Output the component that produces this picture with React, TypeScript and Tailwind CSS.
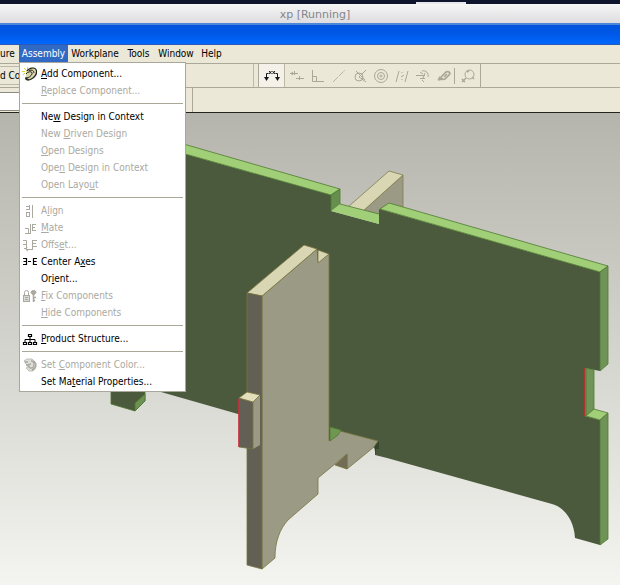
import React from 'react';

type MenuEntry = {
  // the text before, at and after the access key
  label: [string, string, string];
  icon?: React.ReactNode;
  disabled?: boolean;
};

const Icon: React.FC<{ children: React.ReactNode }> = ({ children }) => (
  <svg viewBox="0 0 16 16" className="block h-4 w-4" fill="none" stroke="currentColor" aria-hidden="true">
    {children}
  </svg>
);

const AddIcon = () => (
  <Icon>
    <path d="M2 2l3 3M5.500 1v3M0 5.500h3M1 9l2-2" stroke="#d8d23c" />
    <path d="M4 5l5-4 5 1 1 4-3 5-5 4-4-1 1-4z" fill="#d9d6b0" stroke="none" />
    <path d="M5 5c3-4 9-4 9.500 0s-3 7-6 8.500c-3 1-5 0-5-2" stroke="#24241c" strokeWidth="1.200" />
    <path d="M4 8c2-3 7-3 6 0-1 2-3 4-6 4M7 4.500c3-1 5 0 5 2.500M4 12l3 2" stroke="#24241c" />
  </Icon>
);

const AlignIcon = () => (
  <Icon>
    <path d="M10.500 2v13M4 3.500h4M4 6.500h4M4 9.500h4M4 13.500h4M7.500 2v5M7.500 9v5M4.500 9v5" />
  </Icon>
);

const MateIcon = () => (
  <Icon>
    <path d="M8.500 4v10M3 8.500h3.500v5M3 13.500h5M10 4.500h4M10 7.500h3M10 10.500h4M10.500 4v6" />
  </Icon>
);

const OffsetIcon = () => (
  <Icon>
    <path d="M1 3.500h3.500v9M1 7.500h3M2 11.500h2M5 12.500h6M10.500 3v10M11 3.500h4M11 6.500h3M11 9.500h4M5 10.500l-1 2 2 1.500" />
  </Icon>
);

const AxesIcon = () => (
  <Icon>
    <path d="M1 4.500h3.500v6H1M1.500 7.500h3M6 7.500h3M15 4.500h-3.500v6H15M11.500 7.500h3" strokeWidth="1.200" />
  </Icon>
);

const FixIcon = () => (
  <Icon>
    <rect x="1.500" y="7.500" width="6" height="6" fill="#d8d8d4" />
    <path d="M2.500 7V4.500a2 2 0 0 1 4 0V7M3 9.500h3M3 11.500h3" />
    <path d="M9 4.500a2.500 2 0 1 1 5 0l-1.500 2h-2z" fill="currentColor" />
    <path d="M11.500 6v8M11 9.500h3M11 12.500h2" strokeWidth="1.500" />
  </Icon>
);

const StructureIcon = () => (
  <Icon>
    <path d="M8 5v6M3 11V8.500h10V11" />
    <path d="M6.500 3.500h3v2h-3zM1.500 11.500h3v2h-3zM6.500 11.500h3v2h-3zM11.500 11.500h3v2h-3z" fill="#fff" strokeWidth="1.200" />
  </Icon>
);

const ColorIcon = () => (
  <Icon>
    <path d="M2 4l3-2 5 0 4 4v4l-3 4H7l-3-3 2-1z" fill="#dededa" stroke="#c0c0b8" />
    <path d="M3 5h3M4 8h3M9 4c4 0 4 7 0 7-3 0-3-4 0-4M12 4c3 3 2 8-2 9" strokeWidth="1.300" />
  </Icon>
);

const menuGroups: MenuEntry[][] = [
  [
    { label: ['', 'A', 'dd Component...'], icon: <AddIcon /> },
    { label: ['', 'R', 'eplace Component...'], disabled: true },
  ],
  [
    { label: ['Ne', 'w', ' Design in Context'] },
    { label: ['New ', 'D', 'riven Design'], disabled: true },
    { label: ['', 'O', 'pen Designs'], disabled: true },
    { label: ['Ope', 'n', ' Design in Context'], disabled: true },
    { label: ['Open Layo', 'u', 't'], disabled: true },
  ],
  [
    { label: ['A', 'l', 'ign'], icon: <AlignIcon />, disabled: true },
    { label: ['', 'M', 'ate'], icon: <MateIcon />, disabled: true },
    { label: ['Offs', 'e', 't...'], icon: <OffsetIcon />, disabled: true },
    { label: ['Center A', 'x', 'es'], icon: <AxesIcon /> },
    { label: ['Or', 'i', 'ent...'] },
    { label: ['', 'F', 'ix Components'], icon: <FixIcon />, disabled: true },
    { label: ['', 'H', 'ide Components'], disabled: true },
  ],
  [{ label: ['', 'P', 'roduct Structure...'], icon: <StructureIcon /> }],
  [
    { label: ['Set ', 'C', 'omponent Color...'], icon: <ColorIcon />, disabled: true },
    { label: ['Set Ma', 't', 'erial Properties...'] },
  ],
];

const constraintTools: { name: string; drawing: React.ReactNode }[] = [
  { name: 'Coincident', drawing: <path d="M1 5.500h8M5.500 3v4M7 10.500h8M10.500 8v4M4 4l-2 1.500L4 7" /> },
  { name: 'Perpendicular', drawing: <path d="M2.500 2v11.500H14M2 8.500h4.500V13" /> },
  { name: 'Parallel', drawing: <path d="M2 14L14 2" strokeDasharray="7 1" strokeWidth="0.800" /> },
  {
    name: 'Tangent',
    drawing: (
      <>
        <circle cx="7" cy="9" r="4" />
        <path d="M14 2L7 9l7 5M4 3l9 9" />
      </>
    ),
  },
  {
    name: 'Concentric',
    drawing: (
      <>
        <circle cx="8" cy="8" r="6.500" />
        <circle cx="8" cy="8" r="3.500" />
        <circle cx="8" cy="8" r="1" />
      </>
    ),
  },
  { name: 'Symmetric', drawing: <path d="M2 14L5 3M11 14l3-11M7 9l3-2M8 4v1M8 11v1" /> },
  { name: 'Equal', drawing: <path d="M1 7.500h9M5 10.500h5M5 4l3 2M7 12l2 2M7 3c4-1 7 2 6 6M10 5l-2 5" /> },
  {
    name: 'Fix',
    drawing: (
      <>
        <path d="M3 9l3 3M2 12l4-2" strokeWidth="2" />
        <path d="M6 8l4-4c3-1 5 1 3 3l-4 4c-3 1-5-1-3-3zM8 9l3-3" strokeWidth="1.700" />
      </>
    ),
  },
];

const AssemblyMenu = () => (
  <div
    role="menu"
    className="absolute left-0 top-full z-10 w-[167px] border border-[#a9a799] bg-white px-[2px] pt-[2px] pb-px text-black"
  >
    {menuGroups.map((group, i) => (
      <div key={i} role="group" className={i > 0 ? 'mt-1 border-t border-[#aca899] pt-1' : ''}>
        {group.map(({ label, icon, disabled }) => (
          <button
            key={label.join('')}
            type="button"
            role="menuitem"
            disabled={disabled}
            className="flex h-[17px] w-full items-center gap-[3px] whitespace-nowrap text-left disabled:text-[#aaa99f]"
          >
            <span className="h-4 w-4 shrink-0">{icon}</span>
            <span>
              {label[0]}
              <u>{label[1]}</u>
              {label[2]}
            </span>
          </button>
        ))}
      </div>
    ))}
  </div>
);

const MenuBar = () => (
  <nav className="flex h-[18px] whitespace-nowrap bg-[#ebe8d8] pb-px">
    <button type="button" className="w-[19px] pr-[6px] text-right">ure</button>
    <div className="relative">
      <button type="button" className="h-full w-[49px] bg-[#316ac5] text-white">Assembly</button>
      <AssemblyMenu />
    </div>
    <button type="button" className="w-[54px]">Workplane</button>
    <button type="button" className="w-[33px]">Tools</button>
    <button type="button" className="w-[42px]">Window</button>
    <button type="button" className="w-[29px]">Help</button>
  </nav>
);

const Toolbar = () => (
  <div className="flex h-[25px] border-y border-[#aca899] bg-[#ebe8d8] text-[#aaa796]">
    <div className="w-[254px] shrink-0 border-r border-[#bdb9a8] py-[2px]">
      <button type="button" className="h-[19px] w-[22px] border-y border-[#bdb9a8] text-left text-black">d Co</button>
    </div>
    <div className="ml-1 flex items-center border-x border-[#aca899]">
      <button type="button" aria-label="Dimension" className="flex h-full w-[26px] items-center justify-center border-r border-[#bdb9a8] bg-[#f4f2e8] text-[#17171f]">
        <Icon>
          <path d="M2.500 12V5.500h2M13.500 12V5.500h-2" />
          <path d="M0 9h5l-2.500 4zM11 9h5l-2.500 4z" fill="currentColor" stroke="none" />
          <path d="M5 3l2.500 3M7.500 3L5 6M8.500 3L11 6M11 3L8.500 6" />
        </Icon>
      </button>
      <div className="flex gap-[5px] pl-1 pr-[2px]">
        {constraintTools.map((tool) => (
          <button key={tool.name} type="button" aria-label={tool.name}>
            <Icon>{tool.drawing}</Icon>
          </button>
        ))}
      </div>
      <button type="button" aria-label="Inspect" className="flex h-4 w-[26px] items-center justify-center border-l border-[#aca899]">
        <Icon>
          <circle cx="9.500" cy="6.500" r="4.500" />
          <path d="M6 10l-4 4M2 11l3 3M12 9l2 2M7 4l2-1" strokeWidth="1.500" />
        </Icon>
      </button>
    </div>
  </div>
);

const Viewport = () => (
  <main className="flex-1 bg-linear-to-b from-[#b5b5ad] to-[#f4f4f0]">
    <svg viewBox="0 113 620 472" className="block w-full" role="img" aria-label="Interlocking panels">
      <g strokeWidth="0.8" strokeLinejoin="round">
        {/* back end of the cross panel */}
        <g stroke="#807b4e">
          <path d="M363 211L403 175V208L390 205L380 209V215Z" fill="#9b9a84" />
          <path d="M348 207L389 171L403 175L363 211Z" fill="#d9d6b4" />
        </g>

        {/* left foot */}
        <path d="M111 385V404L135 411L145 401V385Z" fill="#4b5a3c" stroke="#4e7434" />
        <path d="M135 411V403L145 394V401Z" fill="#6c9150" stroke="#4e7434" />

        {/* long panel */}
        <path
          d="M100 130L331 195V211L379 224V209L600 272V371L585 368V416L600 420V545L575 538C574 520 564 507 552 504L387 458L375 455V441H330L238 414L161 392H100Z"
          fill="#4b5a3c"
        />
        <g stroke="#4f7a31">
          <path d="M100 130L331 195L340 189L100 120Z" fill="#a0cf78" />
          <path d="M331 195L340 189V204L331 211Z" fill="#668f4d" />
          <path d="M331 211L340 204L379 214V224Z" fill="#a0cf78" stroke="none" />
          <path d="M340 204L379 214" />
          <path d="M380 209L389 203L608 266L600 272Z" fill="#a0cf78" />
          <path d="M600 272L608 266V364L600 371Z" fill="#709457" />
          <path d="M586 368L594 370V409L586 416Z" fill="#709457" />
          <path d="M586 416L594 409L608 413L600 420Z" fill="#a0cf78" />
          <path d="M600 420L608 413V539L600 545Z" fill="#709457" />
        </g>
        <path d="M585 368V416" stroke="#d0282c" strokeWidth="1.5" />
      </g>

      {/* cross panel */}
      <g stroke="#77733f" strokeWidth="0.8" strokeLinejoin="round">
        <path
          d="M262 296L317 249L318 262L329 254V441L340 431L378 441L374 447L347 469V454L318 478V494L288 520C280 529 275 541 275 558L262 569Z"
          fill="#9b9a84"
        />
        <path d="M335 465L347 454V469Z" fill="#716b58" />
        <path d="M247 293L304 245L317 249L262 296Z" fill="#d9d6b4" />
        <path d="M318 250L329 254L318 263Z" fill="#d9d6b4" />
        <path d="M247 293L262 296V569L247 565Z" fill="#625f54" />
        <path d="M253 402L260 395V445L253 449Z" fill="#9b9a84" stroke="none" />
        <path d="M239 398L253 402V449L239 447Z" fill="#625f54" />
        <path d="M239 398L247 392L260 395L253 402Z" fill="#e3dfbb" />
      </g>
      <path d="M239 399V447" stroke="#d0283c" strokeWidth="1.5" />
      <path d="M330 427L341 430L338 435L330 441Z" fill="#719652" stroke="#4f7a31" strokeWidth="0.8" />
      <path d="M374 447L379 441V449L376 449V455Z" fill="#34452a" />
    </svg>
  </main>
);

const App: React.FC = () => (
  <div className="flex min-h-screen flex-col overflow-hidden bg-[#ebe8d8] font-['DejaVu_Sans_Condensed','DejaVu_Sans',sans-serif] text-[10px] leading-[17px] text-black">
    <div className="flex h-1 justify-center bg-[#10152e] pl-[262px]">
      <div className="mt-[2px] w-[50px] bg-[#e8e8ec]" />
    </div>
    <header className="h-[19px] bg-linear-to-b from-[#f6f6f6] to-[#dddde0] pl-[10px] text-center font-['DejaVu_Sans',sans-serif] text-[11px] leading-[21px] text-[#85858a]">
      xp [Running]
    </header>
    <div className="h-[22px] border-b border-t-2 border-b-[#2858b8] border-t-[#4b86d8] bg-linear-to-b from-[#0054dc] via-[#0058e8] to-[#0068ff]" />
    <MenuBar />
    <Toolbar />
    <div className="flex h-[25px] border-b border-[#24241f] bg-[#ebe8d8] pt-1">
      <div className="w-[192px]">
        <input aria-label="Selection" className="h-[19px] w-[180px] border-y border-[#8d8b80] bg-white" />
      </div>
      <div className="-mt-1 border-l border-[#aca899]" />
    </div>
    <Viewport />
  </div>
);

export default App;
